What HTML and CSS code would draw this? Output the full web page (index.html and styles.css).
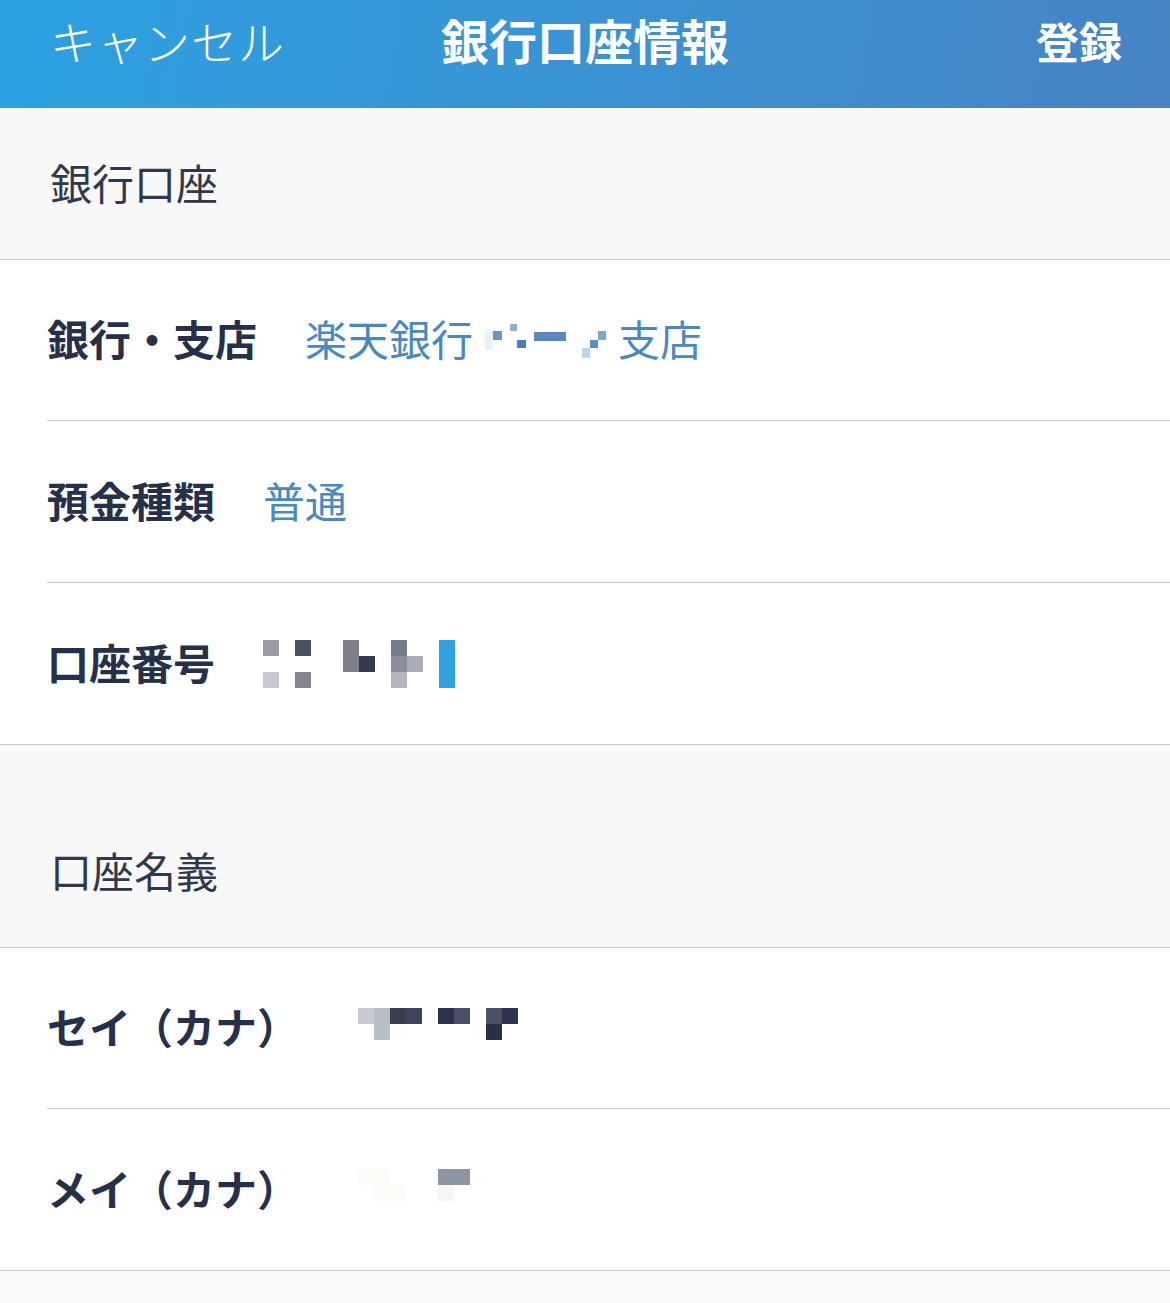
FILE: index.html
```html
<!DOCTYPE html>
<html lang="ja">

<head>
    <meta charset="UTF-8">
    <meta name="viewport" content="width=device-width, initial-scale=1.0">
    <title>銀行口座情報</title>
    <link rel="stylesheet" href="styles.css">
</head>

<body>

    <header class="nav-bar">
        <span class="nav-cancel">キャンセル</span>
        <h1 class="nav-title">銀行口座情報</h1>
        <span class="nav-save">登録</span>
    </header>

    <!-- 銀行口座 -->
    <div class="section-header section-first">銀行口座</div>
    <div class="group">
        <div class="row">
            <span class="row-label">銀行・支店</span>
            <span class="row-value">楽天銀行<svg class="mosaic mosaic-branch" width="145" height="42" viewBox="0 0 145 42">
                    <rect x="12" y="14" width="8" height="19" fill="#e8f2fb" />
                    <rect x="20" y="14" width="9" height="9" fill="#6a96c6" />
                    <rect x="37" y="7" width="7" height="7" fill="#90b0d6" />
                    <rect x="44" y="23" width="9" height="8" fill="#4a80bc" />
                    <rect x="61" y="15" width="32" height="9" fill="#5a88c0" />
                    <rect x="109" y="31" width="8" height="10" fill="#bcd6ef" />
                    <rect x="117" y="23" width="8" height="8" fill="#5b8dc4" />
                    <rect x="125" y="14" width="8" height="9" fill="#7fa7d3" />
                </svg>支店</span>
        </div>
        <div class="row">
            <span class="row-label">預金種類</span>
            <span class="row-value">普通</span>
        </div>
        <div class="row">
            <span class="row-label">口座番号</span>
            <svg class="mosaic" width="192" height="48" viewBox="0 0 192 48">
                <rect x="0" y="0" width="16" height="16" fill="#9a9ca6" />
                <rect x="32" y="0" width="16" height="16" fill="#4a5060" />
                <rect x="0" y="32" width="16" height="16" fill="#c6c9cf" />
                <rect x="32" y="32" width="16" height="16" fill="#83868c" />
                <rect x="80" y="0" width="16" height="32" fill="#7d808c" />
                <rect x="96" y="16" width="16" height="16" fill="#343b4e" />
                <rect x="128" y="0" width="16" height="16" fill="#757b88" />
                <rect x="128" y="16" width="16" height="16" fill="#8a8e9c" />
                <rect x="144" y="16" width="16" height="16" fill="#a9adb9" />
                <rect x="128" y="32" width="16" height="16" fill="#b3b7c2" />
                <rect x="176" y="0" width="16" height="48" fill="#2fa0e0" />
            </svg>
        </div>
    </div>

    <!-- 口座名義 -->
    <div class="section-header section-second">口座名義</div>
    <div class="group">
        <div class="row">
            <span class="row-label">セイ（カナ）</span>
            <svg class="mosaic mosaic-kana" width="176" height="48" viewBox="0 0 176 48">
                <rect x="0" y="4" width="16" height="16" fill="#c8ccd2" />
                <rect x="16" y="4" width="16" height="32" fill="#b8bec6" />
                <rect x="32" y="4" width="16" height="16" fill="#3a3f50" />
                <rect x="48" y="4" width="16" height="16" fill="#3e4460" />
                <rect x="80" y="4" width="16" height="16" fill="#2a3450" />
                <rect x="96" y="4" width="16" height="16" fill="#4a5068" />
                <rect x="128" y="4" width="16" height="16" fill="#4a5066" />
                <rect x="128" y="20" width="16" height="16" fill="#283048" />
                <rect x="144" y="4" width="16" height="16" fill="#283452" />
            </svg>
        </div>
        <div class="row">
            <span class="row-label">メイ（カナ）</span>
            <svg class="mosaic mosaic-kana" width="176" height="48" viewBox="0 0 176 48">
                <rect x="0" y="3" width="32" height="16" fill="#fbfbf8" />
                <rect x="16" y="19" width="32" height="16" fill="#fcfbf8" />
                <rect x="80" y="3" width="32" height="16" fill="#9095a5" />
                <rect x="80" y="19" width="16" height="16" fill="#f6f6f8" />
            </svg>
        </div>
    </div>

</body>

</html>
```

FILE: styles.css
```css
body {
    font-family: "Noto Sans CJK JP", "Noto Sans", sans-serif;
    margin: 0;
    padding: 0;
    background-color: #f9f9f9;
    color: #26304a;
}

.nav-bar {
    height: 108px;
    box-sizing: border-box;
    padding: 0 48px 28px 50px;
    display: flex;
    align-items: center;
    justify-content: space-between;
    position: relative;
    background: linear-gradient(100deg, #2ba1e1 0%, #3a93d4 50%, #4784c2 100%);
    color: #fff;
}

.nav-cancel {
    font-size: 46px;
    font-weight: 300;
    letter-spacing: 1px;
}

.nav-title {
    position: absolute;
    left: 0;
    right: 0;
    top: 9px;
    margin: 0;
    text-align: center;
    font-size: 48px;
    font-weight: bold;
    line-height: 60px;
    pointer-events: none;
}

.nav-save {
    font-size: 43px;
    font-weight: bold;
}

.section-header {
    box-sizing: border-box;
    display: flex;
    align-items: flex-end;
    padding: 0 0 51px 50px;
    background-color: #f8f8f8;
    border-bottom: 1px solid #c8c8c8;
    font-size: 42px;
    line-height: 52px;
    color: #2f384c;
}

.section-first {
    height: 152px;
}

.section-second {
    height: 203px;
}

.group {
    background-color: #fff;
    border-bottom: 1px solid #c8c8c8;
}

.row {
    box-sizing: border-box;
    height: 162px;
    padding-bottom: 4px;
    margin-left: 47px;
    display: flex;
    align-items: center;
    gap: 48px;
    border-bottom: 1px solid #c8c8c8;
}

.row:first-child {
    height: 161px;
}

.row:last-child {
    height: 161px;
    border-bottom: none;
}

.row-label {
    font-size: 42px;
    font-weight: bold;
    line-height: 52px;
    white-space: nowrap;
}

.row-value {
    display: flex;
    align-items: center;
    font-size: 42px;
    line-height: 52px;
    color: #4a88c4;
}

.mosaic {
    display: block;
    flex-shrink: 0;
}

.row > .mosaic {
    margin-top: 4px;
}

.mosaic-kana {
    margin-left: 11px;
}
```
